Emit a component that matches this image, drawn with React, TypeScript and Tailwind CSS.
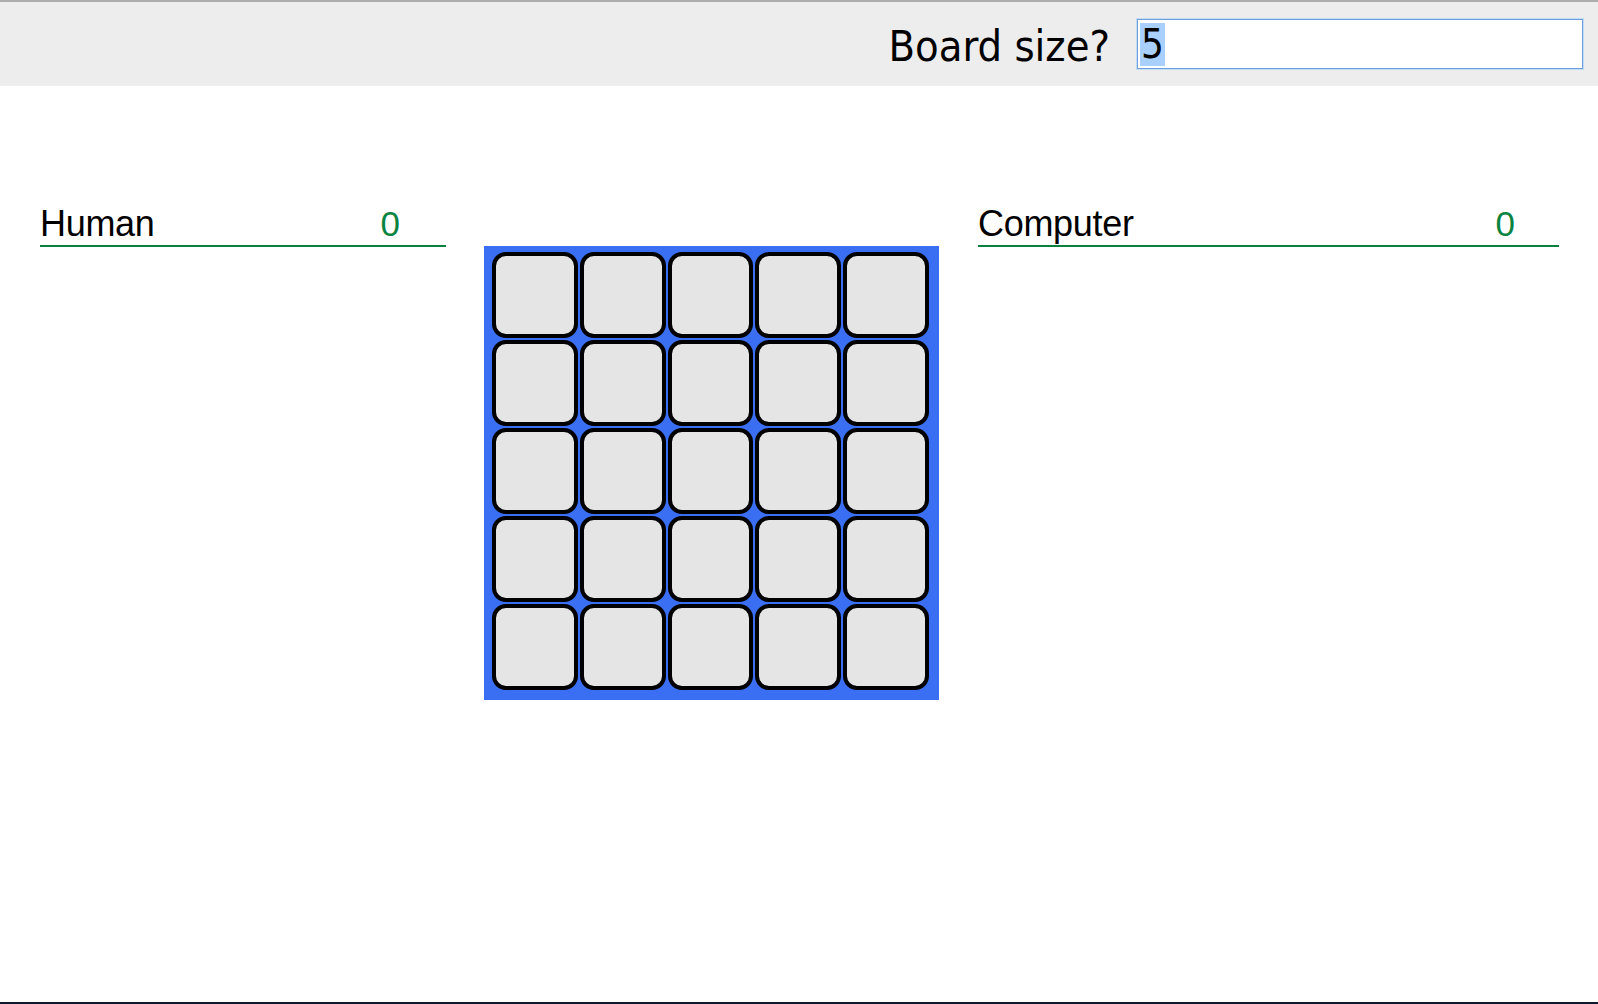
import React from 'react';

const SIZE = 5;

function ScoreHead({ name, score, width, padRight }: { name: string; score: number; width: string; padRight: string }) {
  return (
    <div className={`${width} flex items-end justify-between border-b-2 border-[#0b7f3e] pb-[1px] ${padRight}`}>
      <span className="text-[36px] leading-[40px] text-black tracking-[-0.3px]">{name}</span>
      <span className="text-[35px] leading-[40px] text-[#0b8441]">{score}</span>
    </div>
  );
}

export default function App() {
  const cells = Array.from({ length: SIZE * SIZE });

  return (
    <div className="h-[1004px] w-full flex flex-col bg-white font-['Liberation_Sans',Arial,sans-serif] overflow-hidden">
      {/* toolbar */}
      <div className="h-[86px] shrink-0 bg-[#ededed] border-t-2 border-[#adadad] flex items-start justify-end pr-[15px]">
        <label className="mt-[17px] mr-[27px] text-[43px] leading-[54px] text-black font-['DejaVu_Sans_Condensed','DejaVu_Sans',sans-serif]">
          Board size?
        </label>
        <div className="mt-[17px] w-[446px] h-[50px] bg-white border border-[#6f9fdc] shadow-[0_0_0_1px_#c2dbf7] flex items-center pl-[2px]">
          <span className="bg-[#a9d0fc] h-[43px] px-[1px] flex items-center text-[40px] leading-[43px] text-black font-['DejaVu_Sans_Condensed','DejaVu_Sans',sans-serif]">
            5
          </span>
        </div>
      </div>

      {/* game area */}
      <div className="flex-1 flex items-start pt-[114px]">
        <div className="ml-[40px] pt-[4px]">
          <ScoreHead name="Human" score={0} width="w-[406px]" padRight="pr-[46px]" />
        </div>

        <div className="ml-[38px] mt-[46px] w-[455px] h-[454px] bg-[#3a6ff4] pl-[8px] pt-[6px]">
          <div className="grid grid-cols-5 gap-[2px] w-[437px]">
            {cells.map((_, i) => (
              <div
                key={i}
                className="h-[86px] rounded-[14px] border-[4px] border-black bg-[#e5e5e5]"
              />
            ))}
          </div>
        </div>

        <div className="ml-[39px] pt-[4px]">
          <ScoreHead name="Computer" score={0} width="w-[581px]" padRight="pr-[44px]" />
        </div>
      </div>

      <div className="h-[2px] shrink-0 bg-[#0c1a2b]" />
    </div>
  );
}
